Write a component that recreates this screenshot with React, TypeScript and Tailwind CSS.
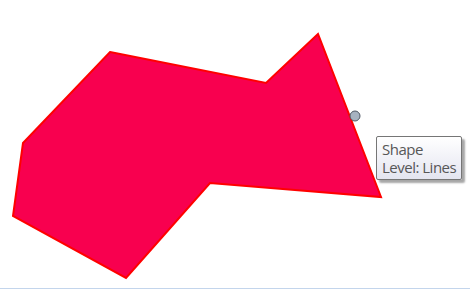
export default function App() {
  return (
    <div className="relative h-[289px] w-[471px] overflow-hidden bg-white">
      <div className="h-[288px] w-full">
        <svg width="471" height="288" viewBox="0 0 471 288" className="block">
          <polygon
            points="110,52 266,83 318,34 381,197 210,183 126,278 13,216 23,143"
            fill="#f8004f"
            stroke="#ff0000"
            strokeWidth="2"
            strokeLinejoin="miter"
          />
          <circle cx="355" cy="116" r="5" fill="#a6b2c0" stroke="#4f5864" strokeWidth="1" />
        </svg>
      </div>
      <div className="h-px w-[470px] bg-[#c3d5ec]" />

      <div className="absolute left-[376px] top-[136px] h-[44px] w-[86px] rounded-[2px] border border-[#767676] bg-gradient-to-b from-white to-[#e4e5f0] pl-[5px] pt-[3px] text-[15px] leading-[18px] tracking-[-0.5px] text-[#575757] shadow-[3px_3px_2px_rgba(0,0,0,0.35)] font-['Open_Sans',sans-serif]">
        <div>Shape</div>
        <div className="whitespace-nowrap">Level: Lines</div>
      </div>
    </div>
  )
}
